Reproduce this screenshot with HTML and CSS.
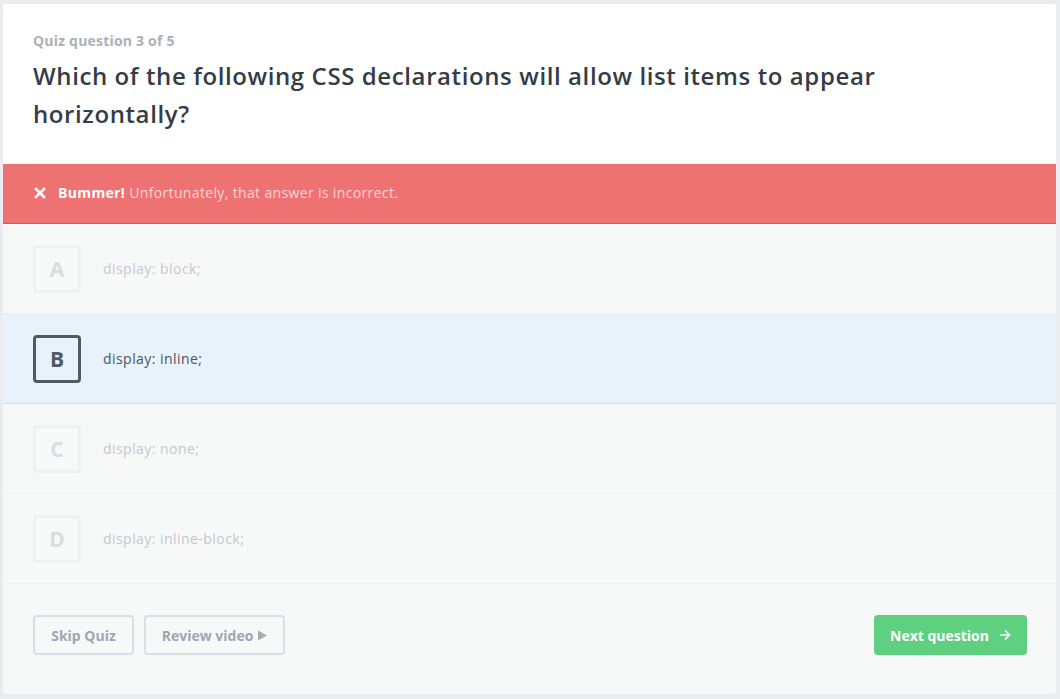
FILE: index.html
```html
<!DOCTYPE html>
<html>
<head>
<meta charset="utf-8">
<link rel="stylesheet" href="styles.css">
</head>
<body>
<div class="card">
  <header class="head">
    <div class="label">Quiz question 3 of 5</div>
    <h1 class="title">Which of the following CSS declarations will allow list items to appear horizontally?</h1>
  </header>
  <div class="alert">
    <svg class="x" width="12" height="12" viewBox="0 0 12 12"><path d="M2 2L10 10M10 2L2 10" stroke="#fff" stroke-width="2.6" stroke-linecap="square"/></svg>
    <span class="alert-strong">Bummer!</span>
    <span class="alert-text">Unfortunately, that answer is incorrect.</span>
  </div>
  <ul class="options">
    <li class="opt dim"><span class="letter">A</span><span class="opt-text">display: block;</span></li>
    <li class="opt picked"><span class="letter">B</span><span class="opt-text">display: inline;</span></li>
    <li class="opt dim"><span class="letter">C</span><span class="opt-text">display: none;</span></li>
    <li class="opt dim"><span class="letter">D</span><span class="opt-text">display: inline-block;</span></li>
  </ul>
  <footer class="foot">
    <div class="left-btns">
      <button class="btn ghost skip">Skip Quiz</button>
      <button class="btn ghost review">Review video <svg width="10" height="11" viewBox="0 0 10 11"><path d="M1 0.5L10 5.5L1 10.5Z" fill="#a3abb4"/></svg></button>
    </div>
    <button class="btn next">Next question <svg width="12" height="12" viewBox="0 0 12 12"><path d="M1 6H10.5M6 1.5L10.5 6L6 10.5" stroke="#fff" stroke-width="1.7" fill="none"/></svg></button>
  </footer>
</div>
</body>
</html>
```

FILE: styles.css
```css
* { box-sizing: border-box; }
html, body { margin: 0; padding: 0; }
body {
  background: #eaecef;
  font-family: "Open Sans", "Noto Sans", sans-serif;
  width: 1060px;
  height: 699px;
  overflow: hidden;
}
.card {
  margin: 4px 0 0 3px;
  width: 1053px;
  height: 690px;
  background: #f7f9f9;
  border-radius: 3px;
  overflow: hidden;
  display: flex;
  flex-direction: column;
}
.head {
  background: #fff;
  height: 160px;
  padding: 29px 30px 0 30px;
}
.label {
  font-size: 14px;
  line-height: 16px;
  font-weight: 700;
  color: #aab1b9;
  letter-spacing: 0.2px;
}
.title {
  margin: 8px 0 0 0;
  font-size: 24px;
  line-height: 38px;
  font-weight: 600;
  color: #343d46;
  letter-spacing: 0.6px;
  width: 900px;
}
.alert {
  background: #ef7272;
  height: 60px;
  border-bottom: 1px solid #e25252;
  display: flex;
  align-items: center;
  padding: 0 0 2px 31px;
  font-size: 14px;
  letter-spacing: 0.35px;
}
.x { margin-right: 12px; }
.alert-strong { color: #fff; font-weight: 700; margin-right: 4px; }
.alert-text { color: #fbd6d6; }
.options { list-style: none; margin: 0; padding: 0; }
.opt {
  height: 90px;
  border-bottom: 1px solid #eef0f2;
  display: flex;
  align-items: center;
  padding: 0 0 0 30px;
}
.letter {
  width: 48px;
  height: 48px;
  border: 3px solid #eef0f2;
  border-radius: 4px;
  display: flex;
  align-items: center;
  justify-content: center;
  font-size: 21px;
  font-weight: 700;
  color: #d9dce0;
  margin-right: 22px;
}
.opt-text { font-size: 14px; color: #c4c8cd; letter-spacing: 0.45px; }
.picked { background: #e8f2fb; border-bottom-color: #d3dbe3; }
.picked .letter { border-color: #4e5966; color: #4e5966; }
.picked .opt-text { color: #4b5561; }
.foot {
  flex: 1;
  display: flex;
  justify-content: space-between;
  align-items: flex-start;
  padding: 31px 29px 0 30px;
}
.left-btns { display: flex; gap: 10px; }
.btn {
  height: 40px;
  font-family: inherit;
  font-size: 14px;
  font-weight: 700;
  border-radius: 4px;
  display: inline-flex;
  align-items: center;
  justify-content: center;
  gap: 6px;
  padding: 0;
  cursor: pointer;
}
.ghost {
  background: transparent;
  border: 2px solid #d9dee2;
  color: #9ea6b0;
}
.skip { width: 101px; }
.review { width: 141px; gap: 4px; }
.next {
  width: 153px;
  background: #5fd07f;
  border: none;
  color: #fff;
  gap: 10px;
}
```
